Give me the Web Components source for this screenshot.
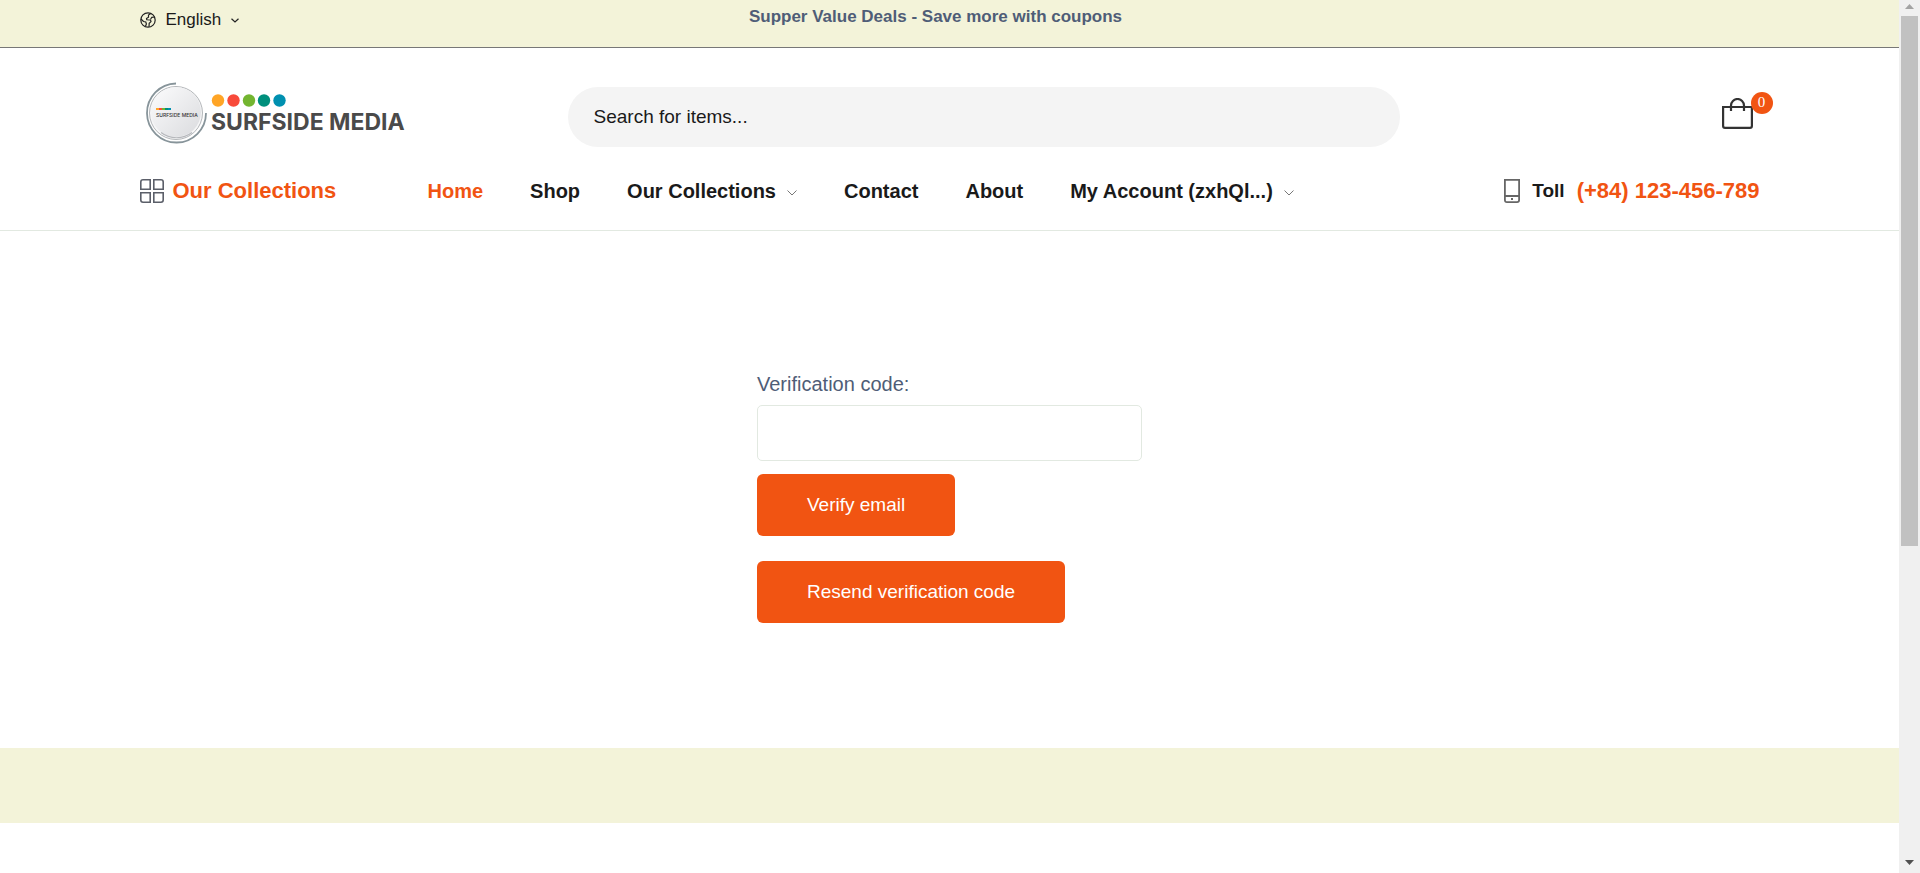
<!DOCTYPE html>
<html lang="en">
<head>
<meta charset="utf-8">
<title>Surfside Media</title>
<style>
  html, body { margin: 0; background: #fff; }
  body { font-family: "Liberation Sans", Arial, sans-serif; color: #1a1a1a; }
</style>
</head>
<body>
<shop-page>
  <shop-topbar slot="header">Supper Value Deals - Save more with coupons</shop-topbar>
  <shop-header slot="header"></shop-header>
  <verify-form></verify-form>
  <shop-newsletter slot="footer"></shop-newsletter>
</shop-page>
<script>
function define(name, html) {
  const template = document.createElement('template');
  template.innerHTML = html;
  customElements.define(name, class extends HTMLElement {
    constructor() {
      super();
      this.attachShadow({ mode: 'open' }).append(template.content.cloneNode(true));
    }
  });
}

define('shop-page', `
  <style>
    :host { display: grid; grid-template-columns: minmax(0, 1fr) 21px; height: 100vh; overflow: hidden; }
    .content { overflow: hidden; }
  </style>
  <div class="content">
    <header><slot name="header"></slot></header>
    <main><slot></slot></main>
    <footer><slot name="footer"></slot></footer>
  </div>
  <scroll-rail aria-hidden="true"></scroll-rail>
`);

define('scroll-rail', `
  <style>
    :host { display: flex; flex-direction: column; align-items: center; background: #f0f0f0; }
    svg { display: block; width: 17px; height: 16px; }
    .track { flex: 1; align-self: stretch; padding: 0 2px; }
    .thumb { height: 63%; background: #c1c1c1; }
  </style>
  <svg viewBox="0 0 17 16"><path d="M4 9 8.500 4 13 9z" fill="#a3a3a3"/></svg>
  <div class="track"><div class="thumb"></div></div>
  <svg viewBox="0 0 17 16"><path d="M4 3h9L8.500 8z" fill="#505050"/></svg>
`);

define('shop-topbar', `
  <style>
    :host { display: block; background: #f3f3d9; border-bottom: 1px solid #777; }
    .bar { box-sizing: border-box; max-width: 1620px; min-height: 47px; margin: 0 auto; display: grid; grid-template-columns: 1fr auto 1fr; }
    a { display: flex; align-items: center; gap: 10px; height: 40px; justify-self: start; color: #1a1a1a; font-size: 17px; text-decoration: none; }
    p { margin: 0 28px 0 0; font-size: 17px; line-height: 34px; font-weight: 700; color: #4f5d77; }
  </style>
  <div class="bar">
    <a href="#language">
      <svg width="16" height="16" viewBox="0 0 16 16" fill="none" stroke="#222" stroke-width="1.200"><circle cx="8" cy="8" r="7.200"/><path d="M10.800 1.500 8.500 3v2.200L6.500 6.500l.3 1.300 3.700.2.500 1.600-1.800 1.600-.2 3.600M14.800 5l-3 .3-1.200 2M1 7l2.500 2.500 2.300.5.600 2-1 2.500"/></svg>
      <span>English</span>
      <svg width="8" height="5" viewBox="0 0 8 5" fill="none" stroke="#222" stroke-width="1.200"><path d="m.5.7 3.500 3.300L7.500.7"/></svg>
    </a>
    <p><slot></slot></p>
  </div>
`);

define('shop-logo', `
  <style>
    :host { display: block; }
    a, svg { display: block; }
  </style>
  <a href="#home" aria-label="Surfside Media">
    <svg width="280" height="64" viewBox="0 0 280 64">
      <defs><linearGradient id="disc" x1="0" y1="0" x2="1" y2="1"><stop offset="0" stop-color="#fcfcfd"/><stop offset="1" stop-color="#dadbde"/></linearGradient></defs>
      <path d="M36 1.500A29.500 29.500 0 1 0 66 31" fill="none" stroke="#87949a" stroke-width="1.800"/>
      <circle cx="36" cy="31" r="26.500" fill="#f6f6f7" stroke="#b4b7ba" stroke-width="1"/>
      <circle cx="36" cy="30" r="25" fill="url(#disc)"/>
      <path d="M21 50.500a25.500 25.500 0 0 0 31 0" fill="none" stroke="#b6b8bc" stroke-width="1.200"/>
      <g><rect x="16" y="26" width="3" height="2" fill="#ffa526"/><rect x="19" y="26" width="3" height="2" fill="#f84a3a"/><rect x="22" y="26" width="3" height="2" fill="#73b530"/><rect x="25" y="26" width="3" height="2" fill="#008f7c"/><rect x="28" y="26" width="3" height="2" fill="#0090b0"/></g>
      <text x="16" y="35" font-family="Inter, sans-serif" font-weight="500" font-size="5" fill="#333">SURFSIDE MEDIA</text>
      <circle cx="78" cy="18.500" r="6.200" fill="#ffa526"/>
      <circle cx="93.500" cy="18.500" r="6.200" fill="#f84a3a"/>
      <circle cx="109" cy="18.500" r="6.200" fill="#73b530"/>
      <circle cx="124" cy="18.500" r="6.200" fill="#008f7c"/>
      <circle cx="139.500" cy="18.500" r="6.200" fill="#0090b0"/>
      <text x="71" y="48" font-family="Inter, sans-serif" font-weight="700" font-size="23" fill="#4a4a4a">SURFSIDE MEDIA</text>
    </svg>
  </a>
`);

define('nav-link', `
  <style>
    :host { display: block; }
    a { display: flex; align-items: center; gap: 11px; font-size: 20px; line-height: 30px; font-weight: 700; color: inherit; text-decoration: none; }
    svg { display: none; }
    :host([menu]) svg { display: block; margin-top: 3px; }
    :host([current]) { color: #f15412; }
  </style>
  <a href="#section"><slot></slot><svg width="10" height="6" viewBox="0 0 10 6" fill="none" stroke="#777"><path d="m.5.5 4.500 4.500L9.500.5"/></svg></a>
`);

define('shop-header', `
  <style>
    :host { display: block; border-bottom: 1px solid #e2e9e1; }
    .inner { max-width: 1620px; margin: 0 auto; }
    .top { display: grid; grid-template-columns: 428px minmax(0, 832px) 1fr; align-items: start; padding-top: 34px; height: 68px; }
    input { box-sizing: border-box; width: 100%; height: 60px; margin-top: 5px; padding: 0 26px; border: 0; border-radius: 30px; background: #f4f4f4; font: 19px "Liberation Sans", Arial, sans-serif; color: #1a1a1a; }
    input::placeholder { color: #1a1a1a; opacity: 1; }
    .cart { position: relative; justify-self: end; margin: 16px 7px 0 0; }
    .cart svg { display: block; }
    .badge { position: absolute; left: 29px; top: -6px; width: 22px; height: 22px; border-radius: 50%; background: #f15412; color: #fff; font-family: "Liberation Serif", serif; font-size: 15px; line-height: 21px; text-align: center; }
    .bottom { display: flex; align-items: center; height: 80px; padding-top: 2px; box-sizing: border-box; }
    .categories { display: flex; align-items: center; gap: 9px; width: 288px; color: #f15412; font-size: 22px; font-weight: 700; text-decoration: none; }
    nav { display: flex; gap: 47px; }
    .phone { display: flex; align-items: center; gap: 12px; margin: 0 0 0 auto; font-size: 19px; font-weight: 700; }
    .phone a { color: #f15412; font-size: 22px; text-decoration: none; }
  </style>
  <div class="inner">
    <div class="top">
      <shop-logo></shop-logo>
      <input type="search" aria-label="Search for items" placeholder="Search for items...">
      <a class="cart" href="#cart" aria-label="Cart">
        <svg width="31" height="31" viewBox="0 0 31 31" fill="none" stroke="#333" stroke-width="2.200"><path d="M1.100 9h28.800V28q0 1.900-1.900 1.900H3q-1.900 0-1.900-1.900zM9 13V7.500a6.500 6.500 0 0 1 13 0V13"/></svg>
        <span class="badge">0</span>
      </a>
    </div>
    <div class="bottom">
      <a class="categories" href="#collections">
        <svg width="24" height="24" viewBox="0 0 24 24" fill="none" stroke="#5b5f69" stroke-width="1.600"><path d="M3 .8h7.200v9.400H.8V3Q.8.8 3 .8zM13.800.8H21q2.200 0 2.200 2.200v7.200h-9.400zM.8 13.800h9.400v9.400H3q-2.200 0-2.200-2.200zM13.800 13.800h9.400V21q0 2.200-2.200 2.200h-7.200z"/></svg>
        Our Collections
      </a>
      <nav>
        <nav-link current>Home</nav-link>
        <nav-link>Shop</nav-link>
        <nav-link menu>Our Collections</nav-link>
        <nav-link>Contact</nav-link>
        <nav-link>About</nav-link>
        <nav-link menu>My Account (zxhQl...)</nav-link>
      </nav>
      <p class="phone">
        <svg width="16" height="24" viewBox="0 0 16 24" fill="none" stroke="#666" stroke-width="1.800"><path d="M.9.900h14.200V21q0 2.100-2.100 2.100H3Q.9 23.100.9 21zM.9 17h14.200"/><path d="M7 20h2"/></svg>
        <span>Toll</span>
        <a href="tel:+84123456789">(+84) 123-456-789</a>
      </p>
    </div>
  </div>
`);

define('verify-form', `
  <style>
    :host { display: block; padding: 140px 0 125px; }
    form { display: flex; flex-direction: column; align-items: flex-start; width: 385px; max-width: 100%; margin: 0 auto; }
    label { font-size: 20px; line-height: 26px; color: #4f5d77; margin-bottom: 8px; }
    input { box-sizing: border-box; width: 100%; height: 56px; padding: 0 20px; border: 1px solid #e2e9e1; border-radius: 5px; font: 19px "Liberation Sans", Arial, sans-serif; margin-bottom: 13px; }
    button { height: 62px; padding: 0 50px; border: 0; border-radius: 6px; background: #f15412; color: #fff; font: 19px "Liberation Sans", Arial, sans-serif; }
    button + button { margin-top: 25px; }
  </style>
  <form>
    <label for="code">Verification code:</label>
    <input id="code" type="text">
    <button type="submit">Verify email</button>
    <button type="button">Resend verification code</button>
  </form>
`);

define('shop-newsletter', `
  <style>
    :host { display: block; height: 75px; background: #f3f3d9; }
  </style>
`);
</script>
</body>
</html>
